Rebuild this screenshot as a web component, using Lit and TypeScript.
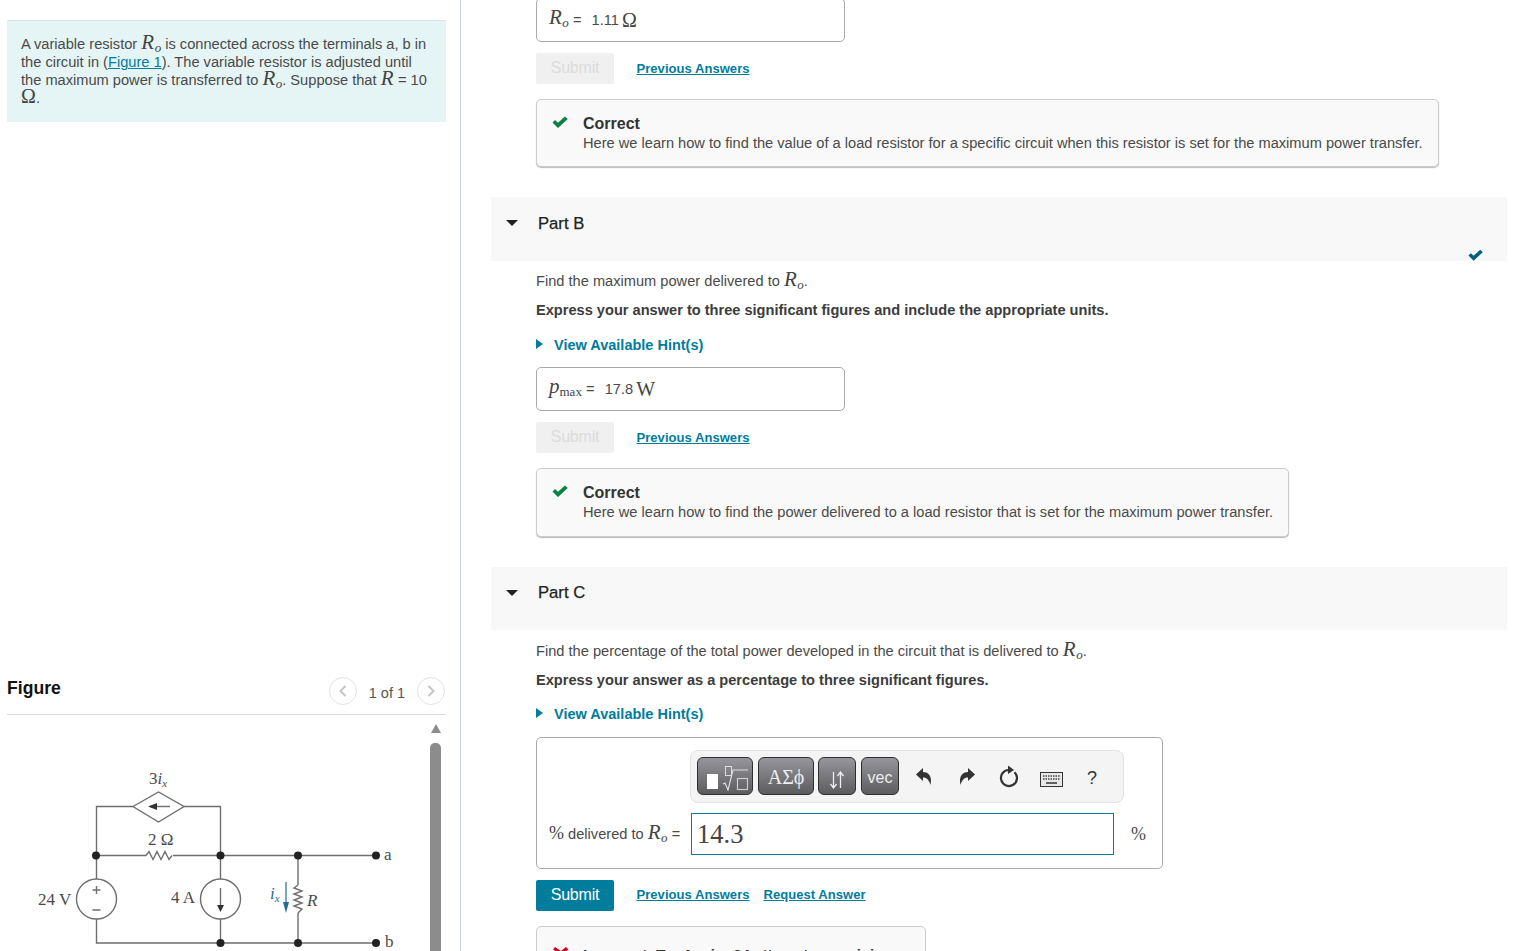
import { html, css, LitElement, svg } from 'lit';
import { customElement } from 'lit/decorators.js';

const ro = () => html`<span class="m"><i class="r">R</i><sub><i>o</i></sub></span>`;

const check = (color: string, w: number, h: number) => html`
  <svg width=${w} height=${h} viewBox="0 0 16 12"><path d="M0.5 6.5 L3 4 L6 6.8 L13 0.5 L15.8 3 L6 12 Z" fill=${color}></path></svg>`;

const undoPath = 'M1 7.5 L8 1 V5 C13.5 5 17.5 9 15.5 18 C14 13 12 10.5 8 10.5 V14 Z';

@customElement('circuit-figure')
class CircuitFigure extends LitElement {
  static styles = css`
    :host { display: block; width: 423px; height: 236px; overflow: hidden; }
    svg { display: block; }
    text { font-family: 'Liberation Serif', serif; fill: #4a4a4a; font-size: 17px; }
    .it { font-style: italic; }
    .sub { font-size: 11px; font-style: italic; }
    .blue { fill: #1f6f94; }
  `;

  render() {
    const dots = [[96, 855.5], [220.5, 855.5], [298, 855.5], [376, 855.5], [220.5, 943], [298, 943], [376, 943]];
    return html`
      <svg width="423" height="236" viewBox="7 715 423 236">
        <g fill="none" stroke="#6e6e6e" stroke-width="1.4">
          <path d="M133 806.500 H96.500 V879 M96.500 919 V943 H298 M298 943 H376"></path>
          <path d="M184 806.500 H220.500 V879 M220.500 919 V943"></path>
          <path d="M96 855.500 H146 M173 855.500 H376"></path>
          <path d="M298 855 V885 M298 913 V943"></path>
          <path d="M133 806.500 L158.500 792 L184 806.500 L158.500 822 Z"></path>
          <circle cx="96.500" cy="899" r="20"></circle>
          <circle cx="220.500" cy="899" r="20"></circle>
          <path d="M146 855.500 L149 851.500 L153 859.500 L157 851.500 L161 859.500 L165 851.500 L169 859.500 L172 855.500"></path>
          <path d="M298 885 L294 888 L302 891 L294 894 L302 897 L294 900 L302 903 L294 906 L302 909 L298 913"></path>
          <path d="M96.500 886 V894 M92.500 890 H100.500 M92.500 910 H100.500"></path>
          <path d="M220.500 888 V908"></path>
          <path d="M150 806.500 H170"></path>
        </g>
        <path d="M148 806.500 L157 803 V810 Z" fill="#333"></path>
        <path d="M217 905 H224 L220.500 912 Z" fill="#333"></path>
        <path d="M286 882 V906" stroke="#1f6f94" stroke-width="1.2"></path>
        <path d="M283 902 H289 L286 913 Z" fill="#1f6f94"></path>
        ${dots.map(d => svg`<circle cx=${d[0]} cy=${d[1]} r="4" fill="#222"></circle>`)}
        <text x="149" y="784">3<tspan class="it">i</tspan><tspan class="sub" dy="3">x</tspan></text>
        <text x="148" y="845">2 Ω</text>
        <text x="384" y="860">a</text>
        <text x="385" y="947">b</text>
        <text x="38" y="905">24 V</text>
        <text x="171" y="903">4 A</text>
        <text class="it blue" x="270" y="899">i<tspan class="sub blue" dy="3">x</tspan></text>
        <text class="it" x="307" y="906">R</text>
      </svg>
    `;
  }
}

@customElement('app-root')
class AppRoot extends LitElement {
  static styles = css`
    :host {
      display: flex;
      height: 951px;
      overflow: hidden;
      background: #fff;
      font-family: 'Liberation Sans', Arial, sans-serif;
      font-size: 14.630px;
      line-height: 20px;
      color: #4a4a4a;
    }
    a { color: #007c9c; text-decoration: underline; }
    .m { font-family: 'Liberation Serif', serif; font-size: 21px; line-height: 0; color: #444; }
    .m .r { letter-spacing: 0.5px; }
    .m sub { font-size: 13px; line-height: 0; vertical-align: -3px; }
    .om { font-family: 'Liberation Serif', serif; font-size: 20px; line-height: 0; color: #444; }
    .val { margin-left: 2px; }
    .answer .om { margin-left: -1px; }

    .left {
      width: 461px;
      flex: none;
      box-sizing: border-box;
      padding: 20px 14px 0 7px;
      border-right: 1px solid #c3d2e0;
    }
    .intro {
      background: #e5f5f6;
      border-top: 1px solid #d8e6e8;
      padding: 14px 14px 15px;
      line-height: 18px;
      height: 102px;
      box-sizing: border-box;
    }
    .fig-head {
      margin-top: 556px;
      height: 37px;
      box-sizing: border-box;
      display: flex;
      border-bottom: 1px solid #d9dde0;
    }
    .fig-title { font-size: 17.600px; font-weight: 700; color: #111; line-height: 20px; flex: 1; }
    .pager { display: flex; align-items: center; height: 28px; margin: -1px 1px 0 0; color: #555; }
    .pager span { margin: 3px 12px 0; font-size: 14.500px; }
    .pager svg { display: block; }
    .fig-body { display: flex; }
    .scroll { width: 11px; flex: none; display: flex; flex-direction: column; align-items: center; }
    .scroll-up {
      margin-top: 9px;
      width: 0;
      height: 0;
      border-left: 5.500px solid transparent;
      border-right: 5.500px solid transparent;
      border-bottom: 9px solid #8c8c8c;
    }
    .thumb { margin-top: 10px; width: 11px; height: 220px; background: #8c8c8c; border-radius: 5px 5px 0 0; }

    .right { flex: 1; min-width: 0; padding: 0 10px 0 30px; overflow: hidden; }
    .part-body { padding-left: 45px; }
    .answer {
      width: 309px;
      height: 44px;
      box-sizing: border-box;
      border: 1px solid #aaa;
      border-radius: 5px;
      display: flex;
      align-items: center;
      padding-left: 12px;
      white-space: pre;
    }
    .answer.first { margin-top: -2px; }
    .actions { display: flex; align-items: center; margin-top: 11px; }
    .btn {
      width: 78px;
      height: 31px;
      border-radius: 2px;
      font-size: 16px;
      line-height: 30px;
      text-align: center;
      letter-spacing: -0.2px;
      background: #007c9c;
      color: #fff;
    }
    .btn.off { background: #f0f0f0; color: #dcdcdc; }
    .actions a { font-size: 13px; font-weight: 700; margin-left: 22.500px; letter-spacing: 0.05px; }
    .actions a + a { margin-left: 14px; }
    .feedback {
      margin-top: 15px;
      box-sizing: border-box;
      height: 68.400px;
      width: max-content;
      display: flex;
      padding: 14px 15px 0 15px;
      background: #f9f9f9;
      border: 1px solid #ccc;
      border-radius: 5px;
      box-shadow: 0 1px 1px #bbb;
    }
    .feedback .ic { width: 31px; flex: none; padding-top: 2px; }
    .feedback svg { display: block; }
    .fb-title { font-size: 16px; font-weight: 700; color: #333; line-height: 20px; }
    .fb-text { line-height: 19px; }
    .part-head {
      position: relative;
      margin-top: 30px;
      height: 63.600px;
      box-sizing: border-box;
      background: #f8f8f8;
      display: flex;
      padding: 16.300px 0 0 15px;
      font-size: 16.670px;
      color: #222;
      -webkit-text-stroke: 0.25px #222;
    }
    .caret {
      width: 0;
      height: 0;
      margin: 6.700px 20px 0 0;
      border-left: 6.500px solid transparent;
      border-right: 6.500px solid transparent;
      border-top: 6.500px solid #222;
    }
    .done { position: absolute; right: 24px; bottom: 0; line-height: 0; }
    .find { margin-top: 10.500px; }
    .bold { margin-top: 9px; font-weight: 700; color: #3c3c3c; font-size: 14.600px; }
    .hint {
      margin: 14.300px 0 12.600px;
      display: flex;
      align-items: center;
      color: #007c9c;
      font-weight: 700;
      font-size: 14.500px;
    }
    .hint b {
      width: 0;
      height: 0;
      margin: -2px 11px 0 0;
      border-top: 5.500px solid transparent;
      border-bottom: 5.500px solid transparent;
      border-left: 7px solid #007c9c;
    }
    .big {
      width: 627px;
      height: 132px;
      box-sizing: border-box;
      border: 1px solid #aaa;
      border-radius: 5px;
      padding: 12px 0 0 153px;
    }
    .toolbar {
      width: 434px;
      height: 53px;
      box-sizing: border-box;
      background: #f4f4f4;
      border: 1px solid #e2e2e2;
      border-radius: 8px;
      display: flex;
      align-items: center;
      padding: 0 0 0 6px;
      margin-bottom: 10px;
    }
    .tb {
      height: 38px;
      box-sizing: border-box;
      margin-right: 5px;
      background: linear-gradient(#96969c, #5c5c5e);
      border: 1px solid #2e2e2e;
      border-radius: 6px;
      color: #eee;
      display: flex;
      align-items: center;
      justify-content: center;
      flex: none;
    }
    .tb.w1 { width: 56px; }
    .tb.w2 { width: 56px; margin-right: 4px; padding-top: 1px; font-family: 'Liberation Serif', serif; font-size: 20px; }
    .tb.w3 { width: 38px; }
    .tb.w3 svg { margin-top: 8px; }
    .tb.w4 { width: 38px; padding-top: 3px; font-size: 16px; margin-right: 0; }
    .tool { flex: none; display: flex; justify-content: center; width: 43px; padding-top: 2px; color: #333; }
    .tool.undo { margin-left: 3px; }
    .tool.reset { width: 40px; margin-left: 1px; padding-top: 0; }
    .tool.keys { width: 44px; padding-top: 6px; }
    .tool.q { font-size: 18px; width: 38px; padding-top: 3px; }
    .row { display: flex; align-items: center; margin-left: -141px; white-space: pre; }
    .row .lbl { width: 142px; flex: none; padding-top: 1px; }
    .row .lbl .om { font-size: 18px; }
    .row .field {
      width: 423px;
      height: 42px;
      box-sizing: border-box;
      border: 1px solid #007c9c;
      padding-left: 5px;
      font-family: 'Liberation Serif', serif;
      font-size: 26.500px;
      line-height: 40px;
      color: #444;
      flex: none;
    }
    .row .unit { margin-left: 17px; font-family: 'Liberation Serif', serif; font-size: 18px; }
    .bad {
      margin-top: 15px;
      width: 390px;
      height: 60px;
      box-sizing: border-box;
      background: #f9f9f9;
      border: 1px solid #ccc;
      border-radius: 5px;
      display: flex;
      padding: 18px 0 0 16px;
    }
    .bad .ic { width: 30px; flex: none; }
    .bad .fb-title { font-size: 15px; }
  `;

  private feedback(text: string) {
    return html`
      <div class="feedback">
        <div class="ic">${check('#0a8043', 16, 12)}</div>
        <div>
          <div class="fb-title">Correct</div>
          <div class="fb-text">${text}</div>
        </div>
      </div>`;
  }

  private partHead(name: string, done: boolean) {
    return html`
      <div class="part-head">
        <div class="caret"></div>
        <div>${name}</div>
        ${done ? html`<div class="done">${check('#005f7a', 15, 12)}</div>` : ''}
      </div>`;
  }

  private circleBtn(d: string) {
    return html`
      <svg width="28" height="28" viewBox="0 0 28 28">
        <circle cx="14" cy="14" r="13.500" fill="#fff" stroke="#e2e2e2"></circle>
        <path d=${d} fill="none" stroke="#c4c4c4" stroke-width="2"></path>
      </svg>`;
  }

  private toolbar() {
    return html`
      <div class="toolbar">
        <div class="tb w1">
          <svg width="46" height="30" viewBox="0 0 46 30">
            <rect x="5" y="13" width="11" height="15" fill="#fff"></rect>
            <rect x="23.500" y="5.500" width="6" height="9" fill="none" stroke="#ddd"></rect>
            <path d="M21 23 L23 22 L26 29 L31 9 H46" fill="none" stroke="#ddd" stroke-width="1.200"></path>
            <rect x="35.500" y="17.500" width="10" height="11" fill="none" stroke="#ccc" stroke-width="1.200"></rect>
          </svg>
        </div>
        <div class="tb w2">ΑΣϕ</div>
        <div class="tb w3">
          <svg width="18" height="18" viewBox="0 0 18 18">
            <path d="M5.500 1 V17 M2.500 13 L5.500 17 L8.500 13 M12.500 17 V1.500 M9.500 5 L12.500 1 L15.500 5" fill="none" stroke="#eee" stroke-width="1.300"></path>
          </svg>
        </div>
        <div class="tb w4">vec</div>
        <div class="tool undo">
          <svg width="18" height="20" viewBox="0 0 18 20"><path d=${undoPath} fill="#333"></path></svg>
        </div>
        <div class="tool">
          <svg width="18" height="20" viewBox="0 0 18 20"><g transform="translate(18 0) scale(-1 1)"><path d=${undoPath} fill="#333"></path></g></svg>
        </div>
        <div class="tool reset">
          <svg width="22" height="24" viewBox="0 0 22 24">
            <path d="M10.500 6 A8 8 0 1 0 16.500 8.200" fill="none" stroke="#333" stroke-width="2.200"></path>
            <path d="M10 1.500 L16 6 L10 10 Z" fill="#333"></path>
          </svg>
        </div>
        <div class="tool keys">
          <svg width="23" height="15" viewBox="0 0 23 15">
            <rect x="0.500" y="0.500" width="22" height="14" fill="#e8e8e8" stroke="#333"></rect>
            <path d="M3 4 H20 M3 7 H20" stroke="#444" stroke-width="1.500" stroke-dasharray="1.500 1"></path>
            <path d="M6 11 H17" stroke="#333" stroke-width="1.500"></path>
          </svg>
        </div>
        <div class="tool q">?</div>
      </div>`;
  }

  render() {
    return html`
      <div class="left">
        <div class="intro">
          A variable resistor ${ro()} is connected across the terminals a, b in the circuit in
          (<a href="#">Figure 1</a>). The variable resistor is adjusted until the maximum power is
          transferred to ${ro()}. Suppose that <span class="m"><i class="r">R</i></span> = 10
          <span class="om">Ω</span>.
        </div>
        <div class="fig-head">
          <div class="fig-title">Figure</div>
          <div class="pager">
            ${this.circleBtn('M16.500 9 L11.500 14 L16.500 19')}
            <span>1 of 1</span>
            ${this.circleBtn('M11.500 9 L16.500 14 L11.500 19')}
          </div>
        </div>
        <div class="fig-body">
          <circuit-figure></circuit-figure>
          <div class="scroll">
            <div class="scroll-up"></div>
            <div class="thumb"></div>
          </div>
        </div>
      </div>

      <div class="right">
        <div class="part-body">
          <div class="answer first">${ro()}<span> =  </span><span class="val">1.11 </span><span class="om">Ω</span></div>
          <div class="actions">
            <div class="btn off">Submit</div>
            <a href="#">Previous Answers</a>
          </div>
          ${this.feedback('Here we learn how to find the value of a load resistor for a specific circuit when this resistor is set for the maximum power transfer.')}
        </div>

        ${this.partHead('Part B', true)}
        <div class="part-body">
          <div class="find">Find the maximum power delivered to ${ro()}.</div>
          <div class="bold">Express your answer to three significant figures and include the appropriate units.</div>
          <div class="hint"><b></b>View Available Hint(s)</div>
          <div class="answer">
            <span class="m"><i>p</i><sub>max</sub></span><span> =  </span><span class="val">17.8 </span><span class="om">W</span>
          </div>
          <div class="actions">
            <div class="btn off">Submit</div>
            <a href="#">Previous Answers</a>
          </div>
          ${this.feedback('Here we learn how to find the power delivered to a load resistor that is set for the maximum power transfer.')}
        </div>

        ${this.partHead('Part C', false)}
        <div class="part-body">
          <div class="find">Find the percentage of the total power developed in the circuit that is delivered to ${ro()}.</div>
          <div class="bold">Express your answer as a percentage to three significant figures.</div>
          <div class="hint"><b></b>View Available Hint(s)</div>
          <div class="big">
            ${this.toolbar()}
            <div class="row">
              <div class="lbl"><span class="om">%</span> delivered to ${ro()} =</div>
              <div class="field">14.3</div>
              <div class="unit">%</div>
            </div>
          </div>
          <div class="actions">
            <div class="btn">Submit</div>
            <a href="#">Previous Answers</a>
            <a href="#">Request Answer</a>
          </div>
          <div class="bad">
            <div class="ic">
              <svg width="16" height="14" viewBox="0 0 16 14"><path d="M2 1 L8 5 L13 1 L15.500 3.500 L10.500 7 L15.500 11 L13 13.500 L8 9.500 L3 13.500 L0.500 11 L5.500 7 L0 3.500 Z" fill="#d0021b"></path></svg>
            </div>
            <div class="fb-title">Incorrect; Try Again; 24 attempts remaining</div>
          </div>
        </div>
      </div>
    `;
  }
}
